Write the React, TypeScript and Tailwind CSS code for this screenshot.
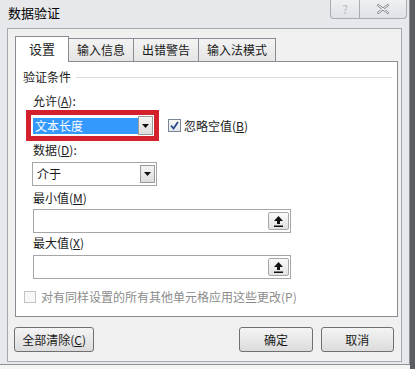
import React from "react";

const F = { fontFamily: '"Noto Sans CJK SC", "Noto Sans", sans-serif' };

function DropBtn({ h }: { h: string }) {
  return (
    <div className={`w-[15px] ${h} flex items-center justify-center border border-[#9a9a9a] bg-gradient-to-b from-[#f4f4f4] to-[#dcdcdc]`}>
      <svg width="7" height="4" viewBox="0 0 7 4">
        <path d="M0 0 L7 0 L3.5 4 Z" fill="#111" />
      </svg>
    </div>
  );
}

function RefBtn() {
  return (
    <div className="w-[21px] h-[18px] flex items-center justify-center border border-[#a8a8a8] bg-gradient-to-b from-[#fafafa] to-[#e2e2e2] rounded-[2px]">
      <svg width="9" height="11" viewBox="0 0 9 11">
        <path d="M4.5 0 L9 5 L6 5 L6 8 L3 8 L3 5 L0 5 Z" fill="#111" />
        <rect x="0" y="9.5" width="9" height="1.5" fill="#111" />
      </svg>
    </div>
  );
}

function Input() {
  return (
    <div className="ml-[17px] w-[258px] h-[24px] border border-[#a6a6a6] bg-white flex items-center justify-end pr-[1px]">
      <RefBtn />
    </div>
  );
}

export default function App() {
  return (
    <div className="w-[415px] h-[369px] flex bg-[#f4f4f4] text-[#1a1a1a]" style={F}>
      <div className="w-[410px] h-[365px] flex flex-col bg-[#e6e8eb] border-r border-b border-[#8e9297]">
        {/* title bar */}
        <div className="h-[28px] shrink-0 flex items-start justify-between">
          <div className="pl-[8px] pt-[4px] text-[13px] leading-[18px] text-black">数据验证</div>
          <div className="flex mr-[2px]">
            <div className="w-[30px] h-[19px] flex items-center justify-center border border-[#a9adb3] border-t-0 rounded-bl-[4px] bg-gradient-to-b from-[#eef0f2] to-[#dfe2e6] text-[12px] leading-none text-[#b9bcc0]">?</div>
            <div className="w-[47px] h-[19px] flex items-center justify-center border border-l-0 border-[#a9adb3] border-t-0 rounded-br-[4px] bg-gradient-to-b from-[#eef0f2] to-[#dfe2e6]">
              <svg width="12" height="10" viewBox="0 0 12 10">
                <path d="M1 1 L11 9 M11 1 L1 9" stroke="#8f949a" strokeWidth="2.4" strokeLinecap="round" />
                <path d="M1 1 L11 9 M11 1 L1 9" stroke="#f4f5f6" strokeWidth="1" strokeLinecap="round" />
              </svg>
            </div>
          </div>
        </div>
        {/* client */}
        <div className="mx-[7px] h-[334px] shrink-0 bg-[#f0f0f0] border border-[#a3a9b0] pt-[6px] px-[7px] flex flex-col">
          {/* tabs */}
          <div className="h-[26px] shrink-0 flex items-end relative z-10">
            <div className="w-[54px] h-[26px] bg-white border border-[#898c95] border-b-0 flex items-center justify-center text-[13px] mb-[-1px] pb-[1px]">设置</div>
            <div className="w-[65px] h-[23px] bg-gradient-to-b from-[#f3f3f3] to-[#e5e5e5] border border-l-0 border-[#898c95] border-b-0 flex items-center justify-center text-[12px]">输入信息</div>
            <div className="w-[65px] h-[23px] bg-gradient-to-b from-[#f3f3f3] to-[#e5e5e5] border border-l-0 border-[#898c95] border-b-0 flex items-center justify-center text-[12px]">出错警告</div>
            <div className="w-[77px] h-[23px] bg-gradient-to-b from-[#f3f3f3] to-[#e5e5e5] border border-l-0 border-[#898c95] border-b-0 flex items-center justify-center text-[12px]">输入法模式</div>
          </div>
          {/* panel */}
          <div className="w-[383px] h-[256px] shrink-0 overflow-hidden bg-white border border-[#898c95] flex flex-col text-[12px] leading-[16px]">
            <div className="mt-[7px] h-[16px] ml-[7px] flex items-center">
              <span>验证条件</span>
              <div className="ml-[5px] w-[316px] h-px bg-[#dcdcdc]" />
            </div>
            <div className="mt-[8px] h-[16px] ml-[17px]">允许(<span className="underline">A</span>):</div>
            <div className="mt-[1px] flex items-center">
              <div className="ml-[10px] w-[133px] h-[31px] border-[5px] border-[#d4202c] bg-white flex items-center pl-[2px]">
                <div className="w-[105px] h-[16px] bg-[#3399ff] text-white leading-[16px] pl-[2px]">文本长度</div>
                <DropBtn h="h-[19px]" />
              </div>
              <div className="ml-[9px] w-[13px] h-[13px] border border-[#7a8596] bg-gradient-to-b from-[#f6f6f6] to-[#e4e8ee] flex items-center justify-center">
                <svg width="9" height="9" viewBox="0 0 9 9">
                  <path d="M1 4.5 L3.5 7.5 L8 1" stroke="#2a4c8c" strokeWidth="1.8" fill="none" />
                </svg>
              </div>
              <span className="ml-[3px]">忽略空值(<span className="underline">B</span>)</span>
            </div>
            <div className="mt-[1px] h-[16px] ml-[17px]">数据(<span className="underline">D</span>):</div>
            <div className="mt-[4px] ml-[16px] w-[125px] h-[24px] shrink-0 border border-[#a6a6a6] bg-white flex items-center justify-between pl-[4px] pr-[1px]">
              <span>介于</span>
              <DropBtn h="h-[18px]" />
            </div>
            <div className="mt-[4px] h-[16px] ml-[17px]">最小值(<span className="underline">M</span>)</div>
            <div className="mt-[3px]"><Input /></div>
            <div className="mt-[2px] h-[16px] ml-[17px]">最大值(<span className="underline">X</span>)</div>
            <div className="mt-[4px]"><Input /></div>
            <div className="mt-[10px] h-[16px] ml-[8px] flex items-center text-[#8c8c8c]">
              <div className="w-[12px] h-[12px] border border-[#c4c4c4] bg-[#f7f7f7]" />
              <span className="ml-[5px]">对有同样设置的所有其他单元格应用这些更改(P)</span>
            </div>
          </div>
          {/* buttons */}
          <div className="mt-[10px] flex items-center text-[12px]">
            <div className="ml-[-1px] w-[83px] h-[25px] border border-[#707070] rounded-[3px] bg-gradient-to-b from-[#f4f4f4] to-[#dcdcdc] flex items-center justify-center">全部清除(<span className="underline">C</span>)</div>
            <div className="ml-[145px] w-[76px] h-[25px] border border-[#707070] rounded-[3px] bg-gradient-to-b from-[#f4f4f4] to-[#dcdcdc] flex items-center justify-center">确定</div>
            <div className="ml-[8px] w-[76px] h-[25px] border border-[#707070] rounded-[3px] bg-gradient-to-b from-[#f4f4f4] to-[#dcdcdc] flex items-center justify-center">取消</div>
          </div>
        </div>
      </div>
      <div className="w-[5px] h-full bg-[#5a5d61]" />
    </div>
  );
}
